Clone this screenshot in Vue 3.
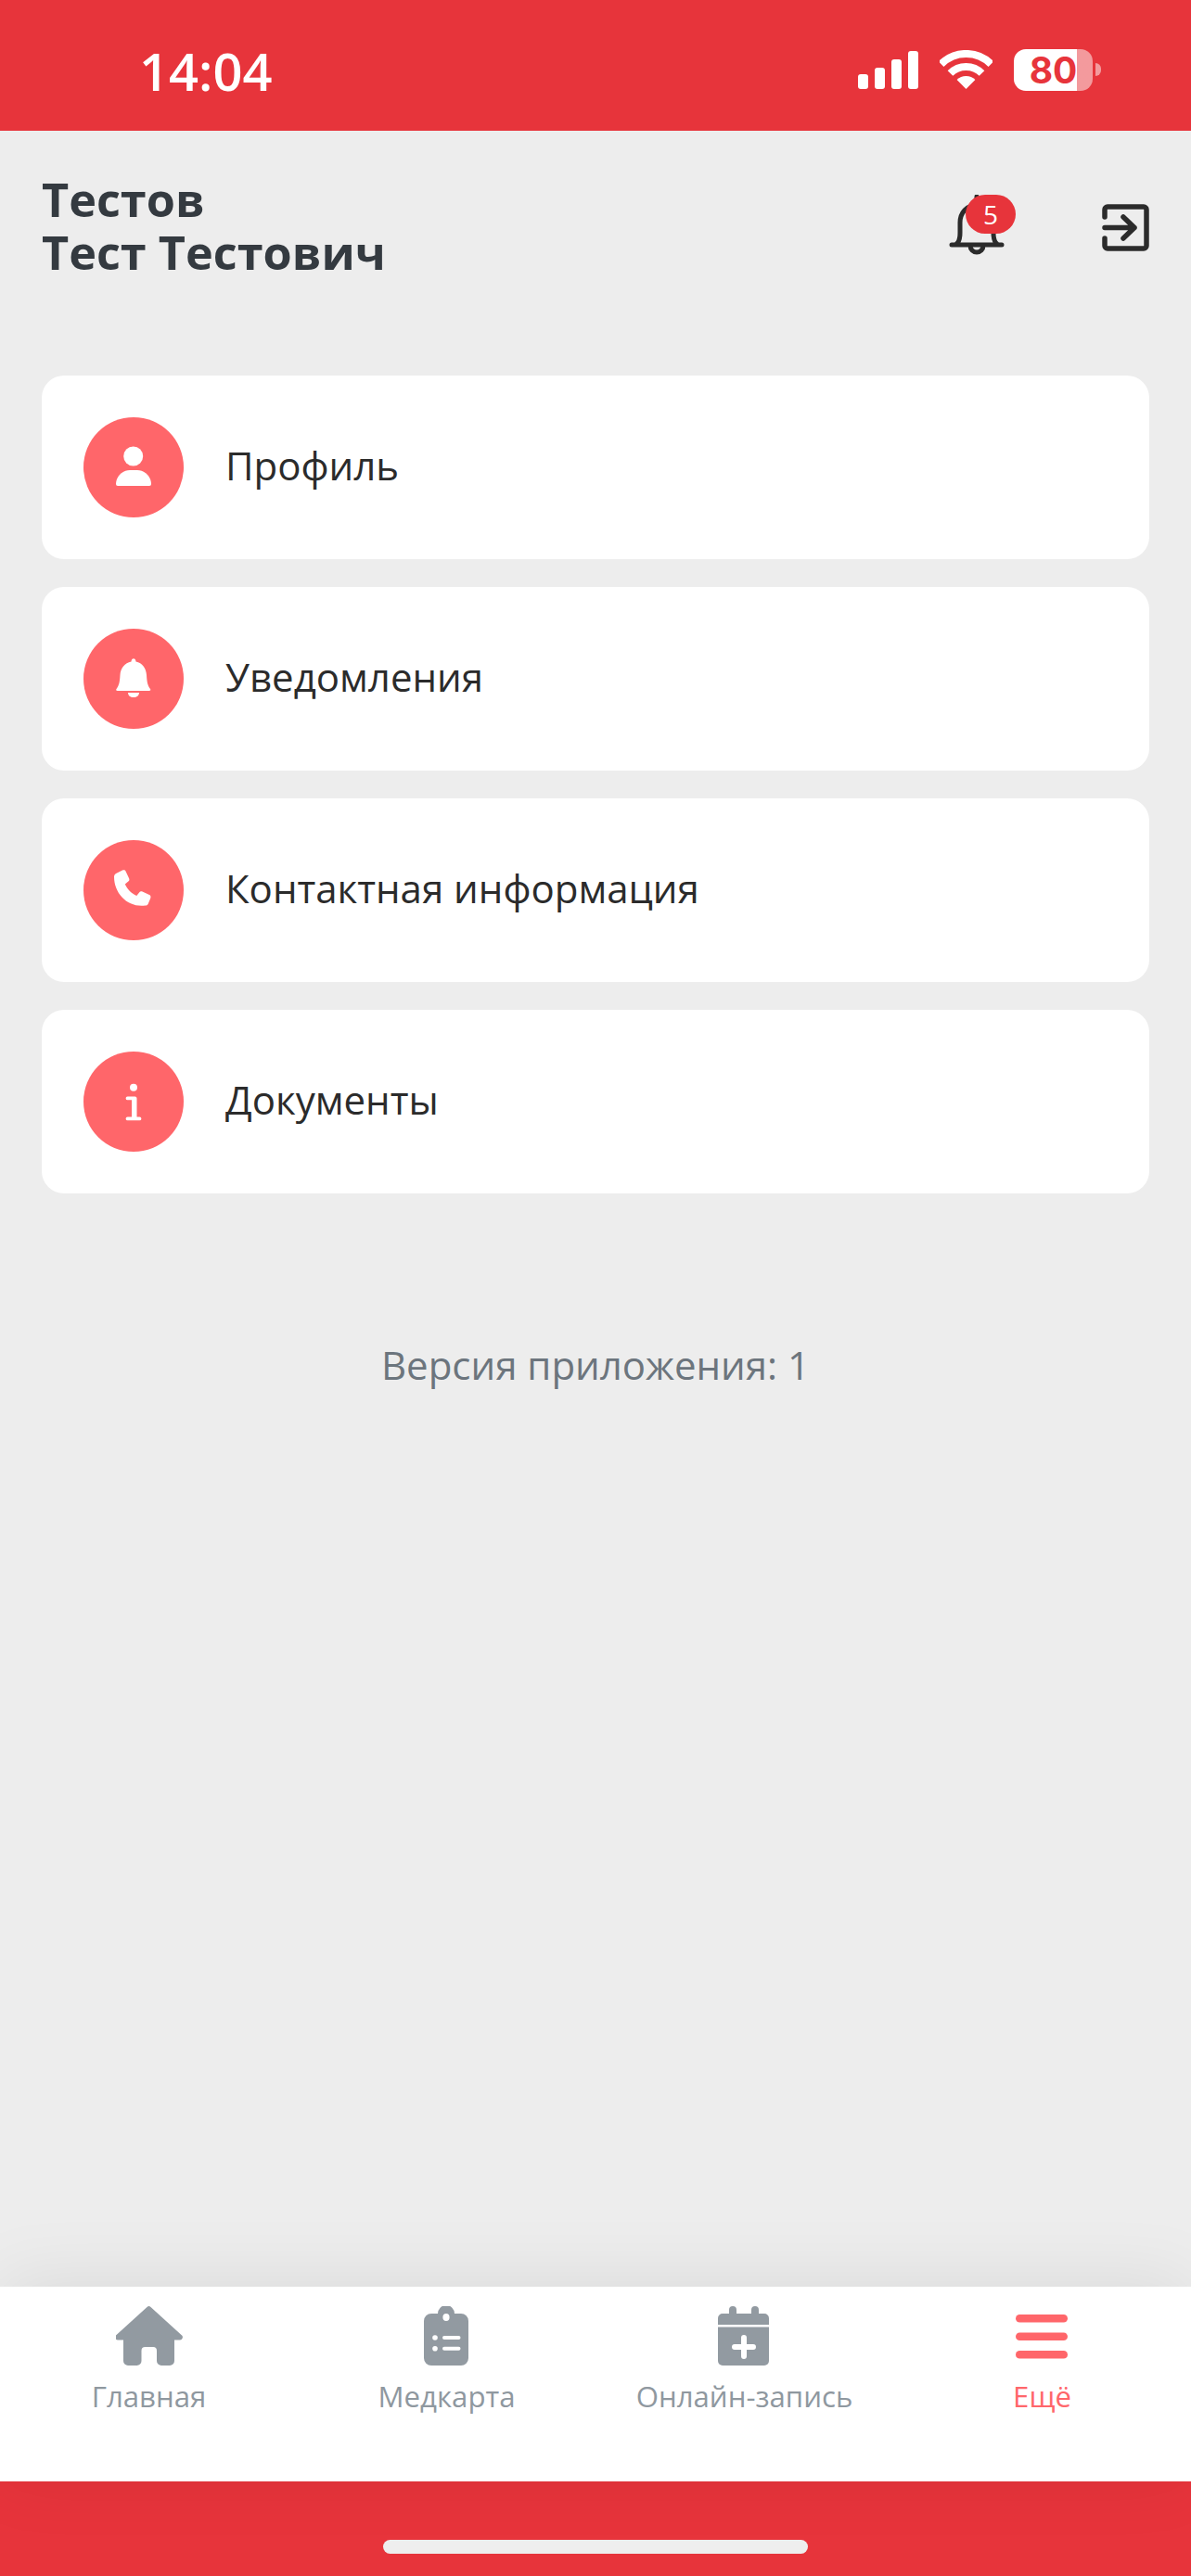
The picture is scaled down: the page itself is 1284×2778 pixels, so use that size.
<template>
  <div class="page">
    <div class="status">
      <span class="time">14:04</span>
      <div class="status-right">
        <div class="signal">
          <i style="height: 16px"></i>
          <i style="height: 23px"></i>
          <i style="height: 32px"></i>
          <i style="height: 41px"></i>
        </div>
        <svg class="wifi" width="57" height="42" viewBox="0 0 57 42">
          <path d="M1.6 15.1A38 38 0 0 1 55.4 15.1M11.5 25A24 24 0 0 1 45.5 25" fill="none" stroke="#fff" stroke-width="8" />
          <path d="M28.5 42L18.6 32.1A14 14 0 0 1 38.4 32.1Z" fill="#fff" />
        </svg>
        <div class="battery"><span>80</span></div>
        <div class="nub"></div>
      </div>
    </div>

    <div class="main">
      <div class="header">
        <div class="name">Тестов<br>Тест Тестович</div>
        <div class="actions">
          <div class="bell">
            <svg width="60" height="66" viewBox="0 0 60 66" fill="none" stroke="#2b2b2b" stroke-width="5" stroke-linecap="round">
              <path d="M3 54H57M8 53c3-2 4-6 4-12V30c0-10 7-19 18-19s18 9 18 19V41c0 6 1 10 4 12M30 2V11M23 55a7 7 0 0 0 14 0" />
            </svg>
            <span class="badge">5</span>
          </div>
          <svg width="51" height="51" viewBox="0 0 51 51" fill="none" stroke="#2b2b2b" stroke-width="5.5" stroke-linecap="round" stroke-linejoin="round">
            <path d="M3 14V6a3 3 0 0 1 3-3H45a3 3 0 0 1 3 3V45a3 3 0 0 1-3 3H6a3 3 0 0 1-3-3V37" />
            <path d="M3 25.5H35M23 14L35 25.5L23 37" />
          </svg>
        </div>
      </div>

      <div class="menu">
        <div class="card" v-for="item in menu" :key="item.title">
          <svg class="circle" width="108" height="108" viewBox="0 0 108 108">
            <circle cx="54" cy="54" r="54" fill="#ff666a" />
            <circle v-if="item.dot" :cx="item.dot[0]" :cy="item.dot[1]" :r="item.dot[2]" fill="#fff" />
            <path :d="item.icon" fill="#fff" />
          </svg>
          <span class="title">{{ item.title }}</span>
        </div>
      </div>

      <div class="version">Версия приложения: 1</div>
    </div>

    <div class="tabs">
      <div class="tab">
        <svg width="72" height="64" viewBox="0 0 72 64" fill="#929aa1">
          <path d="M33.5 1a3 3 0 0 1 4 0L70.5 31a3 3 0 0 1-2 5.5H63V59a5 5 0 0 1-5 5H49a5 5 0 0 1-5-5V48a4 4 0 0 0-4-4H31.5a4 4 0 0 0-4 4V59a5 5 0 0 1-5 5H13a5 5 0 0 1-5-5V36.5H2.5a3 3 0 0 1-2-5.5Z" />
        </svg>
        <span class="label">Главная</span>
      </div>
      <div class="tab">
        <svg class="nudge" width="48" height="64" viewBox="0 0 48 64">
          <path d="M15 8a9 9 0 0 1 18 0h7a8 8 0 0 1 8 8V56a8 8 0 0 1-8 8H8a8 8 0 0 1-8-8V16a8 8 0 0 1 8-8Z" fill="#929aa1" />
          <ellipse cx="24" cy="12" rx="3.6" ry="4" fill="#fff" />
          <circle cx="12" cy="34" r="2.8" fill="#fff" />
          <circle cx="12" cy="45.7" r="2.8" fill="#fff" />
          <rect x="20" y="32" width="19.5" height="4" rx="2" fill="#fff" />
          <rect x="20" y="43.7" width="19.5" height="4" rx="2" fill="#fff" />
        </svg>
        <span class="label">Медкарта</span>
      </div>
      <div class="tab">
        <svg class="nudge" width="56" height="64" viewBox="0 0 56 64">
          <path d="M12 10V4a4 4 0 0 1 8 0V8H36V4a4 4 0 0 1 8 0V8h6a5 5 0 0 1 5 5V20H0V13a5 5 0 0 1 5-5h7Z" fill="#929aa1" />
          <path d="M0 22.500H55V59a5 5 0 0 1-5 5H5a5 5 0 0 1-5-5Z" fill="#929aa1" />
          <path d="M28 34V54M18 44H38" stroke="#fff" stroke-width="6" stroke-linecap="round" />
        </svg>
        <span class="label">Онлайн-запись</span>
      </div>
      <div class="tab active">
        <svg class="nudge" width="56" height="64" viewBox="0 0 56 64" fill="#ff666a">
          <rect y="9" width="56" height="8.500" rx="4.250" />
          <rect y="28.500" width="56" height="8.500" rx="4.250" />
          <rect y="48" width="56" height="8.500" rx="4.250" />
        </svg>
        <span class="label">Ещё</span>
      </div>
    </div>

    <div class="bottom">
      <div class="home-bar"></div>
    </div>
  </div>
</template>

<script setup>
const menu = [
  {
    title: 'Профиль',
    dot: [53.7, 42, 10.5],
    icon: 'M37 74h34a2 2 0 0 0 2-2c0-8-7-15-15-15h-8c-8 0-15 7-15 15a2 2 0 0 0 2 2Z',
  },
  {
    title: 'Уведомления',
    icon: 'M51.500 35.500c0-4.500 5-4.500 5 0c7 1.500 11 7 11.500 14.500c.4 7 1 11 4 15c.8 1.200 0 2-1.200 2H36.700c-1.200 0-2-.8-1.200-2c3-4 3.600-8 4-15c.5-7.500 5-13 12-14.500ZM48 69h12c0 3-2.500 5-6 5s-6-2-6-5Z',
  },
  {
    title: 'Контактная информация',
    icon: 'M36 35.500l6-3c1.600-.6 3-.2 3.600 1.200l3.500 7.500c.6 1.300.3 2.600-.8 3.400l-3.500 2.800c2.500 5.500 7 10 12.500 12.500l2.800-3.500c.8-1.100 2.100-1.400 3.400-.8l7.500 3.500c1.400.6 1.800 2 1.200 3.600l-2.500 6c-.5 1.200-1.600 1.900-3 1.800C48 73 33 58 33 39.500c0-1.800 1.200-3.300 3-4Z',
  },
  {
    title: 'Документы',
    dot: [54, 38.700, 4],
    icon: 'M47.500 48.500h8a2 2 0 0 1 2 2v20h3a1.900 1.900 0 0 1 0 3.800h-13a1.900 1.900 0 0 1 0-3.800H52V52.300h-4.500a1.900 1.900 0 0 1 0-3.800Z',
  },
]
</script>

<style>
html, body {
  margin: 0;
  background: #ededed;
}
</style>

<style scoped>
.page {
  width: 1284px;
  height: 2778px;
  display: flex;
  flex-direction: column;
  background: #ededed;
  font-family: "Open Sans", sans-serif;
  overflow: hidden;
}
.status {
  height: 141px;
  flex: none;
  background: #e7343b;
  display: flex;
  align-items: flex-start;
  justify-content: space-between;
  padding: 0 97px 0 150px;
  box-sizing: border-box;
  color: #fff;
}
.time {
  font-size: 56px;
  font-weight: 600;
  line-height: 74px;
  margin-top: 39px;
}
.status-right {
  display: flex;
  align-items: flex-start;
  margin-top: 53px;
}
.signal {
  display: flex;
  align-items: flex-end;
  gap: 7px;
  height: 41px;
  margin: 2px 23px 0 0;
}
.signal i {
  display: block;
  width: 11px;
  border-radius: 3px;
  background: #fff;
}
.wifi {
  margin: 1px 23px 0 0;
}
.battery {
  width: 85px;
  height: 45px;
  border-radius: 13px;
  background: linear-gradient(90deg, #fff 80%, rgba(255, 255, 255, 0.5) 80%);
  color: #e7343b;
  font-family: Inter, sans-serif;
  font-size: 39px;
  font-weight: 700;
  line-height: 45px;
  text-align: center;
}
.nub {
  width: 6px;
  height: 14px;
  margin: 15px 0 0 3px;
  border-radius: 0 7px 7px 0;
  background: rgba(255, 255, 255, 0.5);
}
.main {
  flex: 1;
  padding: 0 45px;
}
.header {
  display: flex;
  justify-content: space-between;
  align-items: center;
  padding-top: 45px;
}
.name {
  margin-bottom: 4px;
  font-size: 50.400px;
  font-weight: 700;
  line-height: 57px;
  color: #343a40;
}
.actions {
  display: flex;
  align-items: center;
  gap: 105px;
}
.bell {
  position: relative;
  width: 60px;
  height: 66px;
  margin-top: -5px;
}
.bell svg {
  display: block;
}
.badge {
  position: absolute;
  left: 18px;
  top: 0;
  width: 54px;
  height: 42px;
  border-radius: 21px;
  background: #e7343b;
  color: #fff;
  font-size: 28px;
  line-height: 42px;
  text-align: center;
}
.menu {
  display: flex;
  flex-direction: column;
  gap: 30px;
  margin-top: 101px;
}
.card {
  height: 198px;
  box-sizing: border-box;
  padding: 0 45px;
  border-radius: 24px;
  background: #fff;
  display: flex;
  align-items: center;
  gap: 45px;
}
.circle {
  flex: none;
}
.title {
  font-size: 42px;
  color: #2b2b2b;
  margin-bottom: 5px;
}
.version {
  margin-top: 156px;
  font-size: 42px;
  line-height: 57px;
  text-align: center;
  color: #6c757d;
}
.tabs {
  height: 210px;
  flex: none;
  background: #fff;
  display: grid;
  grid-template-columns: repeat(4, 1fr);
  box-shadow: 0 -6px 80px rgba(0, 0, 0, 0.08);
  position: relative;
}
.tab {
  display: flex;
  flex-direction: column;
  align-items: center;
  padding-top: 21px;
  color: #8f989f;
}
.tab.active {
  color: #ff666a;
}
.nudge {
  margin-left: -2px;
}
.label {
  margin-top: 12px;
  font-size: 31.200px;
  line-height: 42px;
}
.bottom {
  height: 102px;
  flex: none;
  background: #e7343b;
  display: flex;
  justify-content: center;
  padding-top: 63px;
  box-sizing: border-box;
}
.home-bar {
  width: 458px;
  height: 15px;
  border-radius: 8px;
  background: #eee;
}
</style>
